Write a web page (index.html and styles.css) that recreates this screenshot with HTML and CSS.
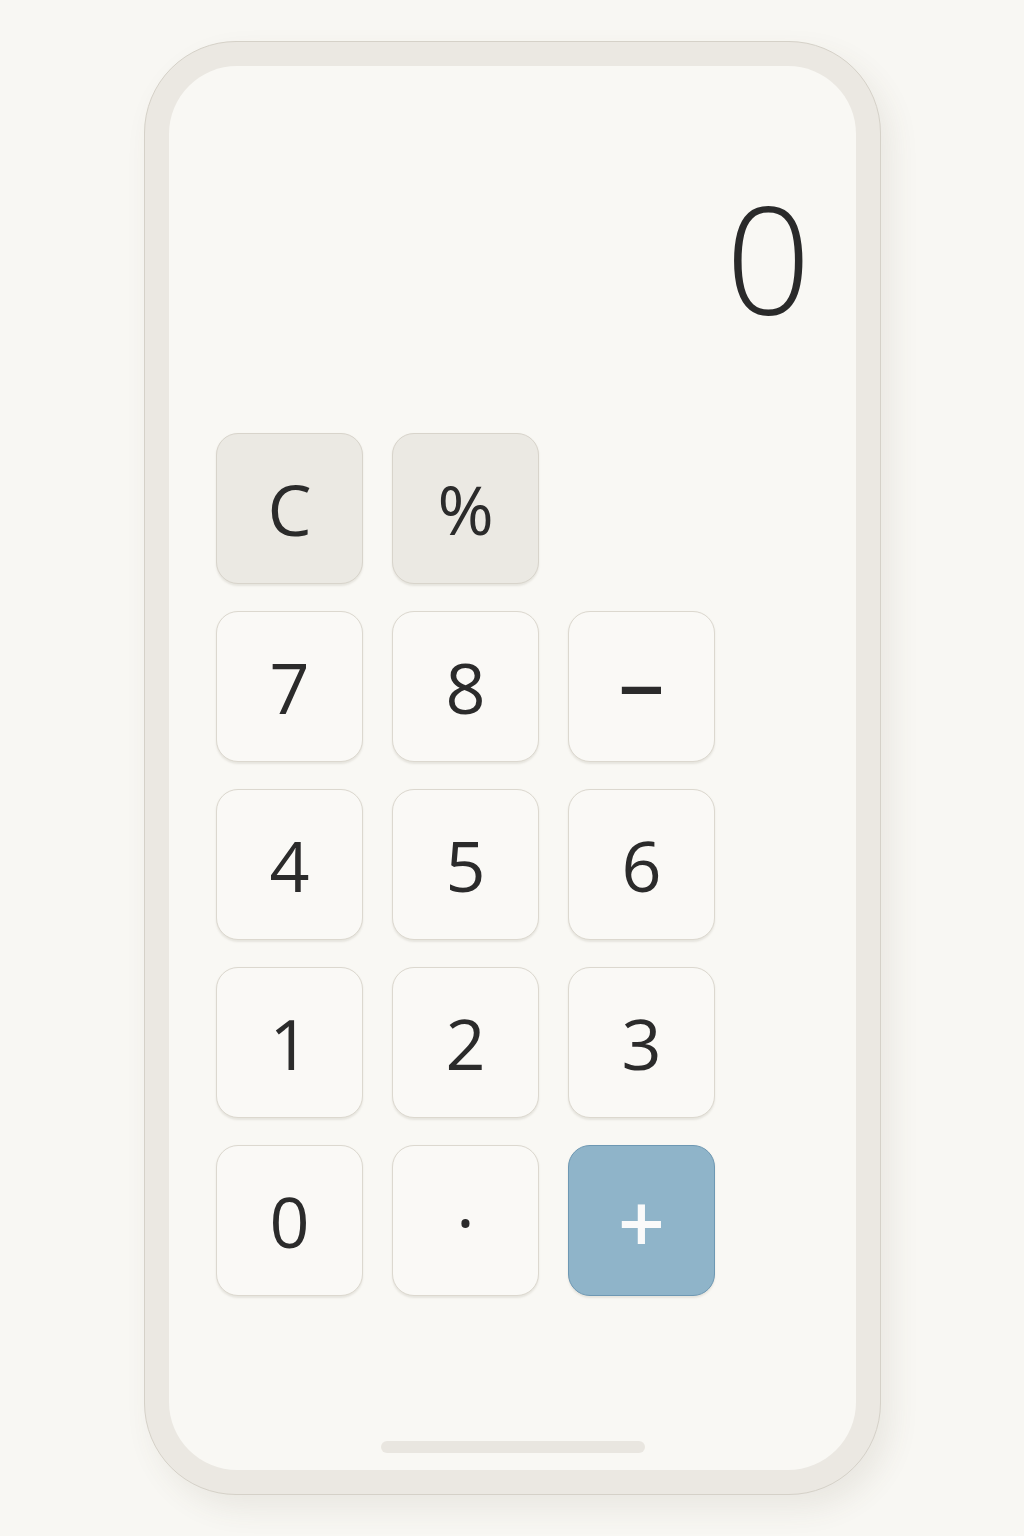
FILE: index.html
```html
<!DOCTYPE html>
<html lang="en">
<head>
<meta charset="utf-8">
<title>Calculator</title>
<link rel="stylesheet" href="styles.css">
</head>
<body>
<div class="phone">
  <div class="screen">
    <div class="display">0</div>
    <div class="keypad">
      <button class="key fn">C</button>
      <button class="key fn pct">%</button>
      <span class="blank"></span>
      <button class="key">7</button>
      <button class="key">8</button>
      <button class="key op">−</button>
      <button class="key">4</button>
      <button class="key">5</button>
      <button class="key">6</button>
      <button class="key">1</button>
      <button class="key">2</button>
      <button class="key">3</button>
      <button class="key">0</button>
      <button class="key dot">·</button>
      <button class="key op plus">+</button>
    </div>
    <div class="spacer"></div>
    <div class="home"></div>
  </div>
</div>
</body>
</html>
```
FILE: styles.css
```css
* { box-sizing: border-box; }
html, body { margin: 0; padding: 0; }
body {
  background: #f8f7f3;
  font-family: "Open Sans", "Liberation Sans", sans-serif;
  color: #2b2b2b;
  width: 1024px;
  height: 1536px;
  overflow: hidden;
}
.phone {
  margin: 41px 0 0 144px;
  width: 737px;
  height: 1454px;
  padding: 24px;
  background: #ebe8e2;
  border: 1.5px solid #d5d1c8;
  border-radius: 92px;
  box-shadow: 10px 14px 30px rgba(90, 80, 60, 0.09);
}
.screen {
  height: 100%;
  background: #f9f8f4;
  border-radius: 68px;
  display: flex;
  flex-direction: column;
  padding: 116px 45px 17px 47px;
}
.display {
  font-size: 150px;
  font-weight: 300;
  line-height: 1;
  text-align: right;
  color: #2a2a2a;
  letter-spacing: 0;
}
.keypad {
  margin-top: 101px;
  display: grid;
  grid-template-columns: repeat(3, 147px);
  grid-auto-rows: 151px;
  column-gap: 29px;
  row-gap: 27px;
}
.key {
  font-family: "Open Sans", "Liberation Sans", sans-serif;
  font-size: 70px;
  font-weight: 400;
  line-height: 1;
  color: #2b2b2b;
  background: #faf9f6;
  border: 1.5px solid #dcd8cf;
  border-radius: 22px;
  box-shadow: 0 1.5px 2px rgba(120, 110, 90, 0.14);
  display: flex;
  align-items: center;
  justify-content: center;
  padding: 0;
}
.key.fn {
  background: #ebe9e3;
  border-color: #d8d4cb;
}
.key.pct { font-size: 68px; }
.key.op { font-weight: 600; font-size: 82px; }
.key.dot { font-size: 70px; font-weight: 500; }
.key.plus {
  background: #8fb4c9;
  border-color: #6e98b3;
  color: #fafafa;
}
.spacer { flex: 1; }
.home {
  align-self: flex-start;
  margin-left: 165px;
  width: 264px;
  height: 12px;
  border-radius: 6px;
  background: #e9e6e0;
}
```
